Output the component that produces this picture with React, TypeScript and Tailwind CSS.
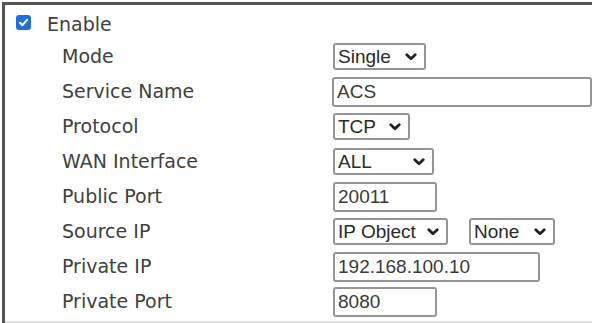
import React from "react";

const Chevron = () => (
  <svg width="12" height="8" viewBox="0 0 12 8" className="shrink-0">
    <path d="M1.8 1.8 L6 5.8 L10.2 1.8" fill="none" stroke="#222" strokeWidth="2.8" strokeLinecap="round" strokeLinejoin="round" />
  </svg>
);

const Select = ({ text, w }: { text: string; w: string }) => (
  <div
    className={`${w} h-[27px] border-2 border-[#959595] rounded-[3px] bg-white flex items-center justify-between pl-[3px] pr-[7px] text-[19px] text-[#2a2a2a] leading-none`}
    style={{ fontFamily: '"Liberation Sans", Arial, sans-serif' }}
  >
    <span>{text}</span>
    <Chevron />
  </div>
);

const Input = ({ text, w }: { text: string; w: string }) => (
  <div
    className={`${w} h-[30px] border-2 border-[#959595] rounded-[3px] bg-white flex items-center pl-[3px] text-[19px] text-[#3a3a3a] leading-none`}
    style={{ fontFamily: '"Liberation Sans", Arial, sans-serif' }}
  >
    {text}
  </div>
);

const Row = ({ label, children }: { label: string; children: React.ReactNode }) => (
  <div className="h-[35px] flex items-center">
    <div className="w-[328px] pl-[57px] text-[19px] text-[#404040] leading-none">{label}</div>
    <div className="flex items-center">{children}</div>
  </div>
);

export default function App() {
  return (
    <div className="w-[592px] h-[323px] bg-white overflow-hidden">
      <div
        className="ml-[2px] mt-[2px] h-[321px] border-l-[3px] border-t-[3px] border-[#555] bg-white relative"
        style={{ fontFamily: '"DejaVu Sans", Verdana, sans-serif' }}
      >
        <div className="h-[35px] flex items-center pl-[11px]">
          <div className="w-[15px] h-[15px] rounded-[3px] bg-[#1f6fde] flex items-center justify-center">
            <svg width="11" height="11" viewBox="0 0 11 11">
              <path d="M2 5.8 L4.4 8.2 L9 2.8" fill="none" stroke="#fff" strokeWidth="2" strokeLinecap="round" strokeLinejoin="round" />
            </svg>
          </div>
          <span className="ml-[16px] mt-[4px] text-[19px] text-[#404040] leading-none">Enable</span>
        </div>
        <div className="-mt-[1px]">
          <Row label="Mode"><Select text="Single" w="w-[93px]" /></Row>
          <Row label="Service Name"><Input text="ACS" w="w-[260px]" /></Row>
          <Row label="Protocol"><Select text="TCP" w="w-[77px]" /></Row>
          <Row label="WAN Interface"><Select text="ALL" w="w-[101px]" /></Row>
          <Row label="Public Port"><Input text="20011" w="w-[104px]" /></Row>
          <Row label="Source IP">
            <Select text="IP Object" w="w-[115px]" />
            <div className="w-[21px]" />
            <Select text="None" w="w-[86px]" />
          </Row>
          <Row label="Private IP"><Input text="192.168.100.10" w="w-[207px]" /></Row>
          <Row label="Private Port"><Input text="8080" w="w-[104px]" /></Row>
        </div>
        <div className="absolute left-0 right-0 bottom-0 h-[2px] bg-[#e2e2e2]" />
      </div>
    </div>
  );
}
